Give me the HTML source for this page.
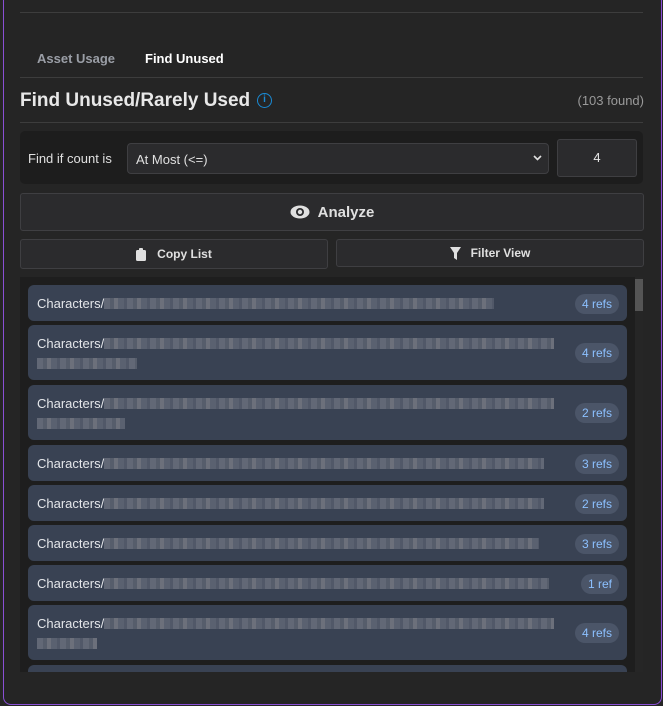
<!DOCTYPE html>
<html><head><style>
*{box-sizing:border-box;margin:0;padding:0}
body{width:663px;height:706px;background:#262626;font-family:"Liberation Sans",sans-serif;position:relative;overflow:hidden;color:#e6e6e6}
.frame{position:absolute;left:3px;top:-10px;width:659px;height:715px;border:1px solid #8a4fd6;border-radius:8px;background:#252525}
.abs{position:absolute}
.line{position:absolute;left:20px;width:623px;height:1px;background:#3d3d3d}
.btn{position:absolute;background:#2b2b2d;border:1px solid #3f3f42;border-radius:3px;display:flex;align-items:center;justify-content:center;color:#e0e0e0;font-weight:bold}
.list{position:absolute;left:20px;top:277px;width:623px;height:395px;background:#1e1e1e;overflow:hidden}
.item{position:absolute;left:8px;width:599px;background:#394253;border-radius:6px;font-size:13px;color:#e4e6ea}
.item .t{position:absolute;left:9px;top:9px;line-height:20px;width:540px;white-space:nowrap}
.blur{display:inline-block;height:11px;vertical-align:-1px;background:repeating-linear-gradient(90deg,#626876 0 6px,#565d6b 6px 10px,#6c707b 10px 14px,#5a6170 14px 20px,#515868 20px 23px)}
.badge{position:absolute;right:8px;background:#4b5568;color:#8cc0ff;font-size:12px;border-radius:10px;padding:3px 7px}
</style></head><body>
<div class="frame"></div>
<div class="line" style="top:12px"></div>
<div class="abs" style="left:37px;top:51px;font-size:13px;font-weight:bold;color:#9a9ea6">Asset Usage</div>
<div class="abs" style="left:145px;top:51px;font-size:13px;font-weight:bold;color:#fff">Find Unused</div>
<div class="line" style="top:77px"></div>
<div class="abs" style="left:20px;top:90px;font-size:19px;font-weight:bold;color:#e8e8e8">Find Unused/Rarely Used</div>
<div class="abs" style="left:257px;top:93px;width:15px;height:15px;border:1.5px solid #1a8ad4;border-radius:50%;color:#1a8ad4;font-size:10px;text-align:center;line-height:12px;font-weight:bold">i</div>
<div class="abs" style="right:19px;top:93px;font-size:13px;color:#9a9a9a">(103 found)</div>
<div class="line" style="top:122px"></div>
<div class="abs" style="left:20px;top:131px;width:623px;height:53px;background:#1d1d1d;border-radius:5px"></div>
<div class="abs" style="left:28px;top:151px;font-size:13px;color:#e0e0e0">Find if count is</div>
<div class="abs" style="left:127px;top:143px;width:422px;height:31px;background:#2b2b2d;border:1px solid #3f3f42;border-radius:4px;font-size:13px;padding:8px 8px;color:#e0e0e0">At Most (&lt;=)<svg style="position:absolute;right:6px;top:11px" width="9" height="6" viewBox="0 0 9 6"><path d="M1 1L4.5 4.5L8 1" stroke="#e0e0e0" stroke-width="1.6" fill="none"/></svg></div>
<div class="abs" style="left:557px;top:139px;width:80px;height:38px;background:#2b2b2d;border:1px solid #3f3f42;border-radius:3px;font-size:13px;text-align:center;line-height:36px">4</div>
<div class="btn" style="left:20px;top:193px;width:624px;height:38px;font-size:15px"><svg width="20" height="14" viewBox="0 0 20 14" style="margin-right:8px"><ellipse cx="10" cy="7" rx="9.5" ry="6.5" fill="#e0e0e0"/><circle cx="10" cy="7" r="4" fill="#2b2b2d"/><circle cx="10" cy="7" r="2.2" fill="#e0e0e0"/></svg>Analyze</div>
<div class="btn" style="left:20px;top:239px;width:308px;height:30px;font-size:12px"><svg width="10" height="13" viewBox="0 0 10 13" style="margin-right:11px"><rect x="0" y="2" width="10" height="11" rx="1.5" fill="#e0e0e0"/><rect x="3" y="0" width="4" height="3" rx="1" fill="#e0e0e0"/></svg>Copy List</div>
<div class="btn" style="left:336px;top:239px;width:308px;height:28px;font-size:12px"><svg width="11" height="13" viewBox="0 0 11 13" style="margin-right:10px"><path d="M0 0H11L7 6V13L4 11V6Z" fill="#e0e0e0"/></svg>Filter View</div>
<div class="list">
<div class="abs" style="left:615px;top:0;width:8px;height:395px;background:#262626"></div>
<div class="abs" style="left:615px;top:2px;width:8px;height:32px;background:#555"></div>
<div class="item" style="top:8px;height:36px"><div class="t">Characters/<span class="blur" style="width:390px"></span></div><div class="badge" style="top:9px">4 refs</div></div>
<div class="item" style="top:48px;height:55px"><div class="t">Characters/<span class="blur" style="width:450px"></span><br><span class="blur" style="width:100px"></span></div><div class="badge" style="top:18px">4 refs</div></div>
<div class="item" style="top:108px;height:55px"><div class="t">Characters/<span class="blur" style="width:450px"></span><br><span class="blur" style="width:88px"></span></div><div class="badge" style="top:18px">2 refs</div></div>
<div class="item" style="top:168px;height:36px"><div class="t">Characters/<span class="blur" style="width:440px"></span></div><div class="badge" style="top:9px">3 refs</div></div>
<div class="item" style="top:208px;height:36px"><div class="t">Characters/<span class="blur" style="width:440px"></span></div><div class="badge" style="top:9px">2 refs</div></div>
<div class="item" style="top:248px;height:36px"><div class="t">Characters/<span class="blur" style="width:435px"></span></div><div class="badge" style="top:9px">3 refs</div></div>
<div class="item" style="top:288px;height:36px"><div class="t">Characters/<span class="blur" style="width:445px"></span></div><div class="badge" style="top:9px">1 ref</div></div>
<div class="item" style="top:328px;height:55px"><div class="t">Characters/<span class="blur" style="width:450px"></span><br><span class="blur" style="width:60px"></span></div><div class="badge" style="top:18px">4 refs</div></div>
<div class="item" style="top:388px;height:40px"></div>
</div>
</body></html>
